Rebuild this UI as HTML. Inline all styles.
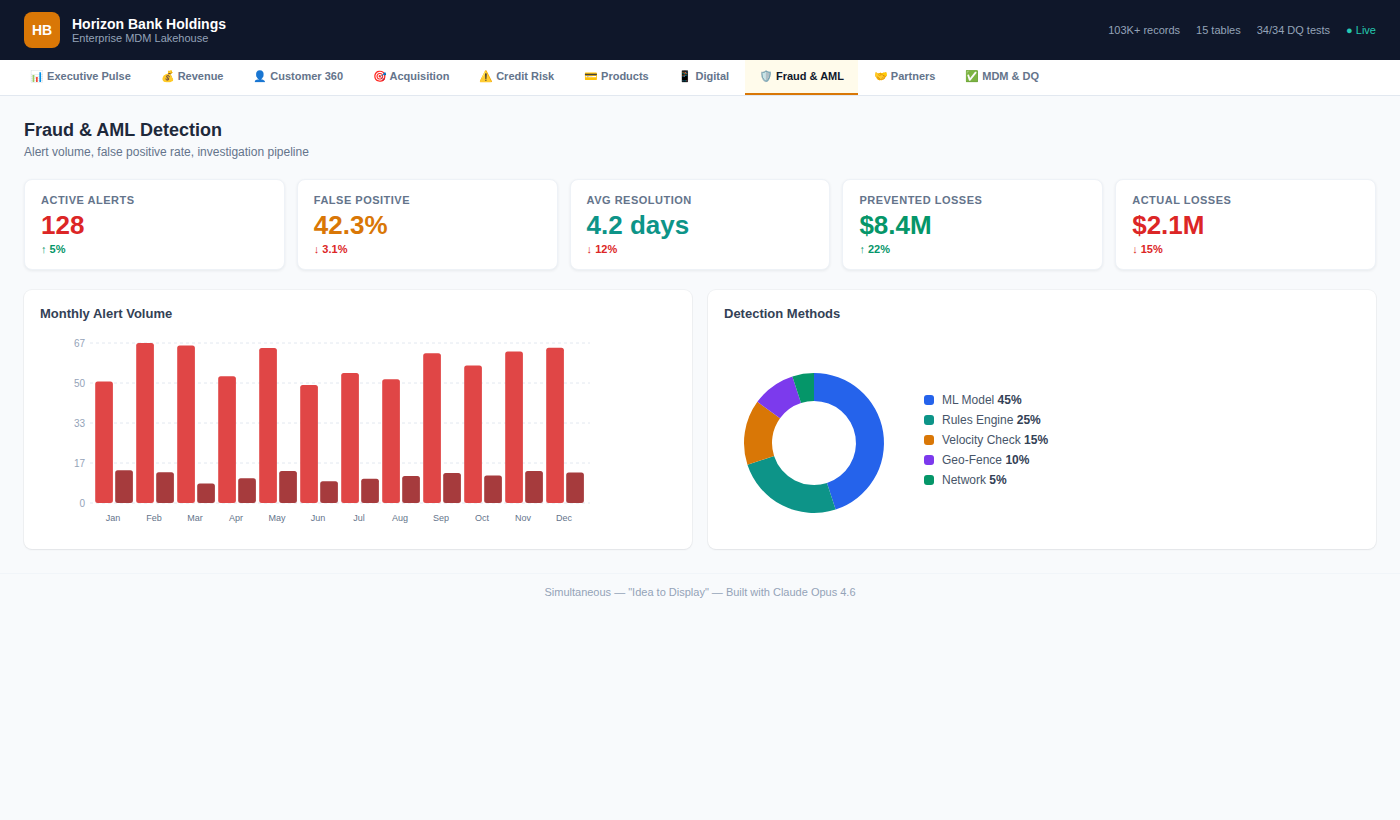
<!DOCTYPE html>
<html><head><meta charset="utf-8">
<style>
*{box-sizing:border-box;margin:0;padding:0}
html,body{width:1400px;height:820px;overflow:hidden}
body{font-family:"Liberation Sans",sans-serif;background:#f8fafc;color:#0f172a;position:relative}
.hdr{position:absolute;left:0;top:0;width:1400px;height:60px;background:#0f172a}
.logo{position:absolute;left:24px;top:12px;width:36px;height:36px;border-radius:8px;background:#d97706;color:#fff;font-weight:700;font-size:14px;text-align:center;line-height:36px}
.brand{position:absolute;left:72px;top:15px;color:#fff;font-weight:700;font-size:14px;line-height:18px}
.brand-sub{position:absolute;left:72px;top:32px;color:#94a3b8;font-size:11px;line-height:13px}
.stats{position:absolute;right:24px;top:22px;font-size:11px;color:#94a3b8;line-height:16px;white-space:nowrap}
.stats span{margin-left:16px}
.stats .live{color:#25c9b1}
.nav{position:absolute;left:0;top:60px;width:1400px;height:36px;background:#fff;border-bottom:1px solid #e2e8f0}
.tabs{position:absolute;left:16px;top:0;display:flex;gap:1.75px;height:35px}
.tab{height:35px;font-size:11px;font-weight:700;color:#64748b;line-height:33px;white-space:nowrap;padding:0 14px;border-bottom:2px solid transparent}
.tab.active{background:#fffbeb;color:#0f172a;border-bottom:2px solid #d97706}
.title{position:absolute;left:24px;top:120px;font-size:18px;font-weight:700;color:#1e293b;line-height:20px}
.subtitle{position:absolute;left:24px;top:145px;font-size:12px;color:#64748b;line-height:14px}
.card{position:absolute;top:179px;height:91px;background:#fff;border:1px solid #eef2f7;border-radius:8px;box-shadow:0 1px 3px rgba(15,23,42,.07)}
.card .lbl{position:absolute;left:16px;top:14px;font-size:11px;font-weight:700;color:#64748b;letter-spacing:.5px;line-height:13px}
.card .val{position:absolute;left:16px;top:30px;font-size:26px;font-weight:700;line-height:30px}
.card .dl{position:absolute;left:16px;top:63px;font-size:11px;font-weight:700;line-height:13px}
.panel{position:absolute;top:290px;height:259px;background:#fff;border-radius:8px;box-shadow:0 0 0 1px rgba(15,23,42,.035),0 1px 2px rgba(15,23,42,.06)}
.ptitle{position:absolute;left:16px;top:16px;font-size:13px;font-weight:700;color:#334155;line-height:15px}
.footer{position:absolute;left:0;top:573px;width:1400px;border-top:1px solid #f1f5f9;text-align:center;font-size:11px;color:#94a3b8;padding-top:12px;line-height:13px}
.charts{position:absolute;left:0;top:0;pointer-events:none}
.yl{font-family:"Liberation Sans",sans-serif;font-size:10px;fill:#94a3b8}
.xl{font-family:"Liberation Sans",sans-serif;font-size:9px;fill:#64748b}
.lg{position:absolute;left:924px;height:18px;line-height:18px;font-size:12px;color:#475569;white-space:nowrap;padding-left:18px}
.lg i{position:absolute;left:0;top:4px;width:10px;height:10px;border-radius:3px}
.lg b{color:#334155}
</style></head>
<body>
<div class="hdr">
  <div class="logo">HB</div>
  <div class="brand">Horizon Bank Holdings</div>
  <div class="brand-sub">Enterprise MDM Lakehouse</div>
  <div class="stats"><span>103K+ records</span><span>15 tables</span><span>34/34 DQ tests</span><span class="live">● Live</span></div>
</div>
<div class="nav"><div class="tabs"><div class="tab">📊 Executive Pulse</div><div class="tab">💰 Revenue</div><div class="tab">👤 Customer 360</div><div class="tab">🎯 Acquisition</div><div class="tab">⚠️ Credit Risk</div><div class="tab">💳 Products</div><div class="tab">📱 Digital</div><div class="tab active">🛡️ Fraud &amp; AML</div><div class="tab">🤝 Partners</div><div class="tab">✅ MDM &amp; DQ</div></div></div>
<div class="title">Fraud &amp; AML Detection</div>
<div class="subtitle">Alert volume, false positive rate, investigation pipeline</div>

<div class="card" style="left:24px;width:260.8px"><div class="lbl">ACTIVE ALERTS</div><div class="val" style="color:#dc2626">128</div><div class="dl" style="color:#059669">↑ 5%</div></div>
<div class="card" style="left:296.8px;width:260.8px"><div class="lbl">FALSE POSITIVE</div><div class="val" style="color:#d97706">42.3%</div><div class="dl" style="color:#dc2626">↓ 3.1%</div></div>
<div class="card" style="left:569.6px;width:260.8px"><div class="lbl">AVG RESOLUTION</div><div class="val" style="color:#0d9488">4.2 days</div><div class="dl" style="color:#dc2626">↓ 12%</div></div>
<div class="card" style="left:842.4px;width:260.8px"><div class="lbl">PREVENTED LOSSES</div><div class="val" style="color:#059669">$8.4M</div><div class="dl" style="color:#059669">↑ 22%</div></div>
<div class="card" style="left:1115.2px;width:260.8px"><div class="lbl">ACTUAL LOSSES</div><div class="val" style="color:#dc2626">$2.1M</div><div class="dl" style="color:#dc2626">↓ 15%</div></div>

<div class="panel" style="left:24px;width:668px"><div class="ptitle">Monthly Alert Volume</div></div>
<div class="panel" style="left:708px;width:668px"><div class="ptitle">Detection Methods</div></div>

<svg class="charts" width="1400" height="820" viewBox="0 0 1400 820">
<line x1="90" y1="343" x2="590" y2="343" stroke="#e2e8f0" stroke-dasharray="3 3"/>
<text x="85" y="343" text-anchor="end" dominant-baseline="central" class="yl">67</text>
<line x1="90" y1="383" x2="590" y2="383" stroke="#e2e8f0" stroke-dasharray="3 3"/>
<text x="85" y="383" text-anchor="end" dominant-baseline="central" class="yl">50</text>
<line x1="90" y1="423" x2="590" y2="423" stroke="#e2e8f0" stroke-dasharray="3 3"/>
<text x="85" y="423" text-anchor="end" dominant-baseline="central" class="yl">33</text>
<line x1="90" y1="463" x2="590" y2="463" stroke="#e2e8f0" stroke-dasharray="3 3"/>
<text x="85" y="463" text-anchor="end" dominant-baseline="central" class="yl">17</text>
<line x1="90" y1="503" x2="590" y2="503" stroke="#e2e8f0" stroke-dasharray="3 3"/>
<text x="85" y="503" text-anchor="end" dominant-baseline="central" class="yl">0</text>
<rect x="95.20" y="381.4" width="17.7" height="121.60" rx="2.5" fill="#e04646"/>
<rect x="115.20" y="470.2" width="17.7" height="32.80" rx="2.5" fill="#a63b3d"/>
<text x="113.0" y="521" text-anchor="middle" class="xl">Jan</text>
<rect x="136.20" y="343" width="17.7" height="160.00" rx="2.5" fill="#e04646"/>
<rect x="156.20" y="472.3" width="17.7" height="30.70" rx="2.5" fill="#a63b3d"/>
<text x="154.0" y="521" text-anchor="middle" class="xl">Feb</text>
<rect x="177.20" y="345.6" width="17.7" height="157.40" rx="2.5" fill="#e04646"/>
<rect x="197.20" y="483.4" width="17.7" height="19.60" rx="2.5" fill="#a63b3d"/>
<text x="195.0" y="521" text-anchor="middle" class="xl">Mar</text>
<rect x="218.20" y="376.3" width="17.7" height="126.70" rx="2.5" fill="#e04646"/>
<rect x="238.20" y="478.2" width="17.7" height="24.80" rx="2.5" fill="#a63b3d"/>
<text x="236.0" y="521" text-anchor="middle" class="xl">Apr</text>
<rect x="259.20" y="348" width="17.7" height="155.00" rx="2.5" fill="#e04646"/>
<rect x="279.20" y="471.1" width="17.7" height="31.90" rx="2.5" fill="#a63b3d"/>
<text x="277.0" y="521" text-anchor="middle" class="xl">May</text>
<rect x="300.20" y="384.9" width="17.7" height="118.10" rx="2.5" fill="#e04646"/>
<rect x="320.20" y="481.25" width="17.7" height="21.75" rx="2.5" fill="#a63b3d"/>
<text x="318.0" y="521" text-anchor="middle" class="xl">Jun</text>
<rect x="341.20" y="373.1" width="17.7" height="129.90" rx="2.5" fill="#e04646"/>
<rect x="361.20" y="478.75" width="17.7" height="24.25" rx="2.5" fill="#a63b3d"/>
<text x="359.0" y="521" text-anchor="middle" class="xl">Jul</text>
<rect x="382.20" y="379.2" width="17.7" height="123.80" rx="2.5" fill="#e04646"/>
<rect x="402.20" y="475.9" width="17.7" height="27.10" rx="2.5" fill="#a63b3d"/>
<text x="400.0" y="521" text-anchor="middle" class="xl">Aug</text>
<rect x="423.20" y="353.2" width="17.7" height="149.80" rx="2.5" fill="#e04646"/>
<rect x="443.20" y="473" width="17.7" height="30.00" rx="2.5" fill="#a63b3d"/>
<text x="441.0" y="521" text-anchor="middle" class="xl">Sep</text>
<rect x="464.20" y="365.4" width="17.7" height="137.60" rx="2.5" fill="#e04646"/>
<rect x="484.20" y="475.5" width="17.7" height="27.50" rx="2.5" fill="#a63b3d"/>
<text x="482.0" y="521" text-anchor="middle" class="xl">Oct</text>
<rect x="505.20" y="351.4" width="17.7" height="151.60" rx="2.5" fill="#e04646"/>
<rect x="525.20" y="471.1" width="17.7" height="31.90" rx="2.5" fill="#a63b3d"/>
<text x="523.0" y="521" text-anchor="middle" class="xl">Nov</text>
<rect x="546.20" y="347.75" width="17.7" height="155.25" rx="2.5" fill="#e04646"/>
<rect x="566.20" y="472.5" width="17.7" height="30.50" rx="2.5" fill="#a63b3d"/>
<text x="564.0" y="521" text-anchor="middle" class="xl">Dec</text>
<path d="M814.00 373.00A70 70 0 0 1 835.63 509.57L826.98 482.94A42 42 0 0 0 814.00 401.00Z" fill="#2563eb"/>
<path d="M835.63 509.57A70 70 0 0 1 747.43 464.63L774.06 455.98A42 42 0 0 0 826.98 482.94Z" fill="#0d9488"/>
<path d="M747.43 464.63A70 70 0 0 1 757.37 401.86L780.02 418.31A42 42 0 0 0 774.06 455.98Z" fill="#d97706"/>
<path d="M757.37 401.86A70 70 0 0 1 792.37 376.43L801.02 403.06A42 42 0 0 0 780.02 418.31Z" fill="#7c3aed"/>
<path d="M792.37 376.43A70 70 0 0 1 814.00 373.00L814.00 401.00A42 42 0 0 0 801.02 403.06Z" fill="#059669"/>
</svg>
<div class="lg" style="top:391px"><i style="background:#2563eb"></i>ML Model <b>45%</b></div><div class="lg" style="top:411px"><i style="background:#0d9488"></i>Rules Engine <b>25%</b></div><div class="lg" style="top:431px"><i style="background:#d97706"></i>Velocity Check <b>15%</b></div><div class="lg" style="top:451px"><i style="background:#7c3aed"></i>Geo-Fence <b>10%</b></div><div class="lg" style="top:471px"><i style="background:#059669"></i>Network <b>5%</b></div>
<div class="footer">Simultaneous — "Idea to Display" — Built with Claude Opus 4.6</div>
</body></html>
